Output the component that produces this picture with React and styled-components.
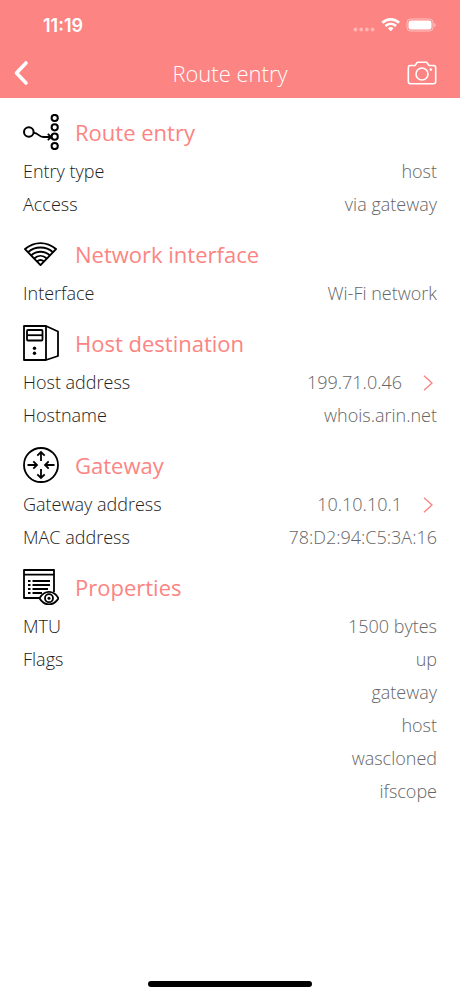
import React from 'react';
import styled, { createGlobalStyle } from 'styled-components';

const GlobalStyle = createGlobalStyle`
    * {
        box-sizing: border-box;
    }

    body {
        margin: 0;
        background: #fff;
        font-family: 'Open Sans', 'Noto Sans', sans-serif;
        font-weight: 300;
    }
`;

/* Icons */

const RouteIcon = () => (
    <svg width="36" height="36" viewBox="0 0 36 36" fill="none" stroke="#000" strokeWidth="2">
        <circle cx="5.800" cy="18" r="4.800" />
        <circle cx="31.700" cy="4" r="3.100" />
        <circle cx="31.700" cy="13.300" r="3.100" />
        <circle cx="31.700" cy="22.700" r="3.100" />
        <circle cx="31.700" cy="32" r="3.100" />
        <path d="M10.800 18.800C15.500 19 15.500 22.700 20.500 23H28M24.800 19.800L28.200 23l-3.400 3.200" strokeWidth="1.8" />
    </svg>
);

const NetworkIcon = () => (
    <svg width="36" height="36" viewBox="0 0 36 36" fill="none" stroke="#000" strokeWidth="1.9" strokeLinejoin="round">
        <path d="M2 13.100C11.500 5.100 23.500 5.100 33 13.100L17.500 29.100Z" />
        <path d="M5 16.200C12 9.900 23 9.900 30 16.200" />
        <path d="M8.100 19.400C13.500 14.500 21.500 14.500 26.900 19.400" />
        <path d="M11.100 22.500C15 19 20 19 23.900 22.500" />
        <path d="M14 25.500C16.200 23.500 18.800 23.500 21 25.500" />
    </svg>
);

const HostIcon = () => (
    <svg width="36" height="36" viewBox="0 0 36 36" fill="none" stroke="#000" strokeWidth="1.8" strokeLinejoin="round">
        <path d="M1 1H23V35H1ZM23 1L35 6.500V31L23 35" />
        <rect x="4" y="5" width="15.500" height="10.500" rx="1" />
        <path d="M4 10.200H19.500" />
        <circle cx="11.500" cy="23.300" r="1.700" fill="#000" stroke="none" />
        <circle cx="11.500" cy="28.300" r="1.700" fill="#000" stroke="none" />
    </svg>
);

const GatewayIcon = () => (
    <svg width="36" height="36" viewBox="0 0 36 36" fill="none" stroke="#000" strokeWidth="1.8">
        <circle cx="18" cy="18" r="17" />
        <path d="M18 14V5.200M14.300 8.700L18 5l3.700 3.700" />
        <path d="M18 22v8.800M14.300 27.300L18 31l3.700-3.700" />
        <path d="M4.500 18H14M10.300 14.300L14 18l-3.700 3.700" />
        <path d="M31.500 18H22M25.700 14.300L22 18l3.700 3.700" />
    </svg>
);

const PropertiesIcon = () => (
    <svg width="36" height="36" viewBox="0 0 36 36" fill="none" stroke="#000" strokeWidth="1.8">
        <path d="M17 29H1V1H31V23M1 5.700H31" strokeLinejoin="round" />
        <path d="M5 12h2.500M9.500 12H27M5 16h2.500M9.500 16H27M5 20h2.500M9.500 20H25M5 24h2.500M9.500 24H19" />
        <path d="M16.500 29.300C21.500 20.800 30.500 20.800 35.500 29.300C30.500 37.500 21.500 37.500 16.500 29.300Z" fill="#fff" />
        <circle cx="26" cy="29.200" r="4" />
        <circle cx="26" cy="29.200" r="1.500" fill="#000" stroke="none" />
    </svg>
);

const BackIcon = () => (
    <svg width="16" height="26" viewBox="0 0 16 26" fill="none" stroke="#fff" strokeWidth="3.6" strokeLinecap="round" strokeLinejoin="round">
        <path d="M13 3L3.500 13l9.500 10" />
    </svg>
);

const CameraIcon = () => (
    <svg width="30" height="24" viewBox="0 0 30 24" fill="none" stroke="#fff" strokeWidth="1.6" strokeLinejoin="round">
        <path d="M3.500 4.500H8L10.300 1.300H19.700L22 4.500H26.500Q28.700 4.500 28.700 6.700V20.500Q28.700 22.700 26.500 22.700H3.500Q1.300 22.700 1.300 20.500V6.700Q1.300 4.500 3.500 4.500Z" />
        <circle cx="15" cy="13" r="6" />
        <circle cx="23.800" cy="8.600" r="1.300" fill="#fff" stroke="none" />
    </svg>
);

const ChevronIcon = () => (
    <svg width="10" height="16" viewBox="0 0 10 16" fill="none" stroke="#fc8482" strokeWidth="1.4">
        <path d="M1 .7L9 8l-8 7.300" />
    </svg>
);

const StatusIcons = () => (
    <svg width="84" height="16" viewBox="0 0 84 16" fill="none">
        <g fill="#fff" opacity=".4">
            <circle cx="3.500" cy="12.500" r="1.900" />
            <circle cx="9.200" cy="12.500" r="1.900" />
            <circle cx="14.900" cy="12.500" r="1.900" />
            <circle cx="20.600" cy="12.500" r="1.900" />
        </g>
        <g stroke="#fff" strokeWidth="2.600">
            <path d="M30.300 5.800C35 1.200 42.400 1.200 47.100 5.800" />
            <path d="M33.400 9C36.600 6 40.800 6 44 9" />
        </g>
        <path d="M35.900 11.200C37.500 9.700 39.900 9.700 41.500 11.200L38.700 14.300Z" fill="#fff" />
        <rect x="55" y="2" width="26" height="12" rx="3.600" stroke="#fff" strokeOpacity=".5" />
        <rect x="56.500" y="3.500" width="23" height="9" rx="2.200" fill="#fff" />
        <path d="M82.300 6C84 6.700 84 9.300 82.300 10Z" fill="#fff" fillOpacity=".6" />
    </svg>
);

/* Data shown on the screen */

const sections = [
    {
        title: 'Route entry',
        icon: RouteIcon,
        rows: [
            { label: 'Entry type', values: ['host'] },
            { label: 'Access', values: ['via gateway'] },
        ],
    },
    {
        title: 'Network interface',
        icon: NetworkIcon,
        rows: [{ label: 'Interface', values: ['Wi-Fi network'] }],
    },
    {
        title: 'Host destination',
        icon: HostIcon,
        rows: [
            { label: 'Host address', values: ['199.71.0.46'], link: true },
            { label: 'Hostname', values: ['whois.arin.net'] },
        ],
    },
    {
        title: 'Gateway',
        icon: GatewayIcon,
        rows: [
            { label: 'Gateway address', values: ['10.10.10.1'], link: true },
            { label: 'MAC address', values: ['78:D2:94:C5:3A:16'] },
        ],
    },
    {
        title: 'Properties',
        icon: PropertiesIcon,
        rows: [
            { label: 'MTU', values: ['1500 bytes'] },
            { label: 'Flags', values: ['up', 'gateway', 'host', 'wascloned', 'ifscope'] },
        ],
    },
];

function Section({ title, icon: Icon, rows }) {
    return (
        <SectionStyled>
            <SectionHeader>
                <Icon />
                <SectionTitle>{title}</SectionTitle>
            </SectionHeader>
            <Rows>
                {rows.map(({ label, values, link }) => (
                    <Row key={label}>
                        <Label>{label}</Label>
                        <Values>
                            {values.map((value) => (
                                <Value key={value}>
                                    {link ? (
                                        <ValueButton type="button">
                                            {value}
                                            <ChevronIcon />
                                        </ValueButton>
                                    ) : value}
                                </Value>
                            ))}
                        </Values>
                    </Row>
                ))}
            </Rows>
        </SectionStyled>
    );
}

function App() {
    return (
        <Screen>
            <GlobalStyle />
            <Header>
                <StatusBar>
                    <Time>11:19</Time>
                    <StatusIcons />
                </StatusBar>
                <NavBar>
                    <NavButton type="button" aria-label="Back"><BackIcon /></NavButton>
                    <PageTitle>Route entry</PageTitle>
                    <NavButton type="button" aria-label="Camera" $end><CameraIcon /></NavButton>
                </NavBar>
            </Header>
            <Content>
                {sections.map((section) => (
                    <Section key={section.title} {...section} />
                ))}
            </Content>
            <HomeIndicator />
        </Screen>
    );
}

const Screen = styled.div`
    display: flex;
    flex-direction: column;
    min-height: 100vh;
`;

const Header = styled.header`
    padding-bottom: 2px;
    background: #fc8482;
    color: #fff;
`;

const StatusBar = styled.div`
    display: flex;
    align-items: center;
    justify-content: space-between;
    height: 50px;
    padding: 0 24px 0 43px;
`;

const Time = styled.time`
    font-family: Inter, 'Liberation Sans', sans-serif;
    font-size: 18px;
    font-weight: 600;
`;

const NavBar = styled.div`
    display: grid;
    grid-template-columns: 48px 1fr 48px;
    align-items: center;
    height: 46px;
    padding: 0 23px 0 13px;
`;

const NavButton = styled.button`
    display: flex;
    justify-content: ${({ $end }) => ($end ? 'flex-end' : 'flex-start')};
    padding: 0;
    border: none;
    background: none;
    cursor: pointer;
`;

const PageTitle = styled.h1`
    margin: 0;
    padding-left: 10px;
    font-size: 22px;
    font-weight: 300;
    line-height: 30px;
    text-align: center;
`;

const Content = styled.main`
    display: flex;
    flex: 1;
    flex-direction: column;
    gap: 11px;
    padding: 12px 23px;
`;

const SectionStyled = styled.section`
    display: flex;
    flex-direction: column;
    gap: 1px;
`;

const SectionHeader = styled.div`
    display: flex;
    align-items: center;
    gap: 16px;
    height: 44px;
`;

const SectionTitle = styled.h2`
    margin: 0;
    color: #fc8482;
    font-size: 22px;
    font-weight: 400;
    line-height: 30px;
`;

const Rows = styled.dl`
    margin: 0;
`;

const Row = styled.div`
    display: flex;
    justify-content: space-between;
    font-size: 18px;
    line-height: 33px;
`;

const Label = styled.dt`
    color: #222;
`;

const Values = styled.dd`
    margin: 0;
    text-align: right;
`;

const Value = styled.div`
    color: #666;
`;

const ValueButton = styled.button`
    display: flex;
    align-items: center;
    gap: 21px;
    padding: 0 4px 0 0;
    border: none;
    background: none;
    color: inherit;
    font: inherit;
    cursor: pointer;
`;

const HomeIndicator = styled.div`
    align-self: center;
    width: 164px;
    height: 6px;
    margin-bottom: 9px;
    border-radius: 3px;
    background: #000;
`;

export default App;
